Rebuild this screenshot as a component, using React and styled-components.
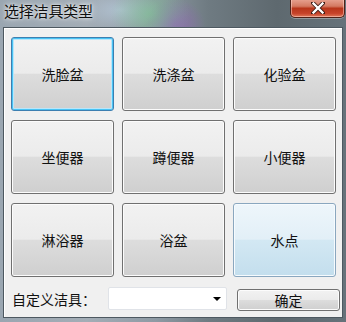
import React from "react";
import styled, { createGlobalStyle, css } from "styled-components";

const Global = createGlobalStyle`
  html, body { margin: 0; padding: 0; background: #5d6870; }
  body { font-family: "Noto Sans CJK SC", "Liberation Sans", sans-serif; }
`;

const Frame = styled.div`
  width: 346px;
  height: 322px;
  box-sizing: border-box;
  display: flex;
  flex-direction: column;
  background:
    radial-gradient(ellipse 40px 30px at 150px 14px, rgba(120,200,140,0.55), transparent),
    radial-gradient(ellipse 30px 25px at 175px 24px, rgba(150,90,190,0.6), transparent),
    radial-gradient(ellipse 40px 20px at 120px 10px, rgba(190,210,230,0.6), transparent),
    linear-gradient(90deg, #9aa6b1 0%, #a3adb6 25%, #8e9aa4 45%, #6f7b82 60%, #5e696f 80%, #66727a 100%);
  padding: 0 3px 4px 3px;
`;

const TitleBar = styled.div`
  height: 27px;
  display: flex;
  align-items: flex-start;
  justify-content: space-between;
  flex-shrink: 0;
`;

const Title = styled.div`
  font-size: 15px;
  line-height: 22px;
  padding-left: 1px;
  color: #101010;
  text-shadow: 0 0 6px rgba(255,255,255,0.9), 0 0 3px rgba(255,255,255,0.8);
  letter-spacing: -0.2px;
`;

const CloseBtn = styled.div`
  width: 55px;
  height: 19px;
  margin-top: -1px;
  margin-right: -2px;
  box-sizing: border-box;
  border: 1px solid #4e2219;
  border-top: none;
  border-radius: 0 0 5px 5px;
  background: linear-gradient(180deg, #e8a493 0%, #d47a62 40%, #b8361b 52%, #c7432a 80%, #e0785a 100%);
  box-shadow: inset 0 0 0 1px rgba(255,220,210,0.5), 0 1px 0 rgba(255,255,255,0.3);
  display: flex;
  align-items: center;
  justify-content: center;
`;

const Client = styled.div`
  flex: 1;
  background: #f0f0f0;
  border: 1px solid #4d5860;
  box-shadow: inset 1px 1px 0 #ffffff;
  padding: 9px 0 0 7px;
  display: flex;
  flex-direction: column;
`;

const Grid = styled.div`
  display: grid;
  grid-template-columns: repeat(3, 103px);
  grid-auto-rows: 74px;
  column-gap: 8px;
  row-gap: 9px;
`;

const Btn = styled.div`
  box-sizing: border-box;
  border: 1px solid #707070;
  border-radius: 3px;
  background: linear-gradient(180deg, #f2f2f2 0%, #ebebeb 49%, #dddddd 50%, #cfcfcf 100%);
  box-shadow: inset 0 0 0 1px #fcfcfc;
  display: flex;
  align-items: center;
  justify-content: center;
  font-size: 14px;
  color: #111;
  ${(p) =>
    p.$variant === "focus" &&
    css`
      border-color: #3c7fb1;
      box-shadow: inset 0 0 0 1px #48c3f4, inset 0 0 0 2px #b9e6fa;
    `}
  ${(p) =>
    p.$variant === "hover" &&
    css`
      border-color: #8aa7bf;
      background: linear-gradient(180deg, #eef6fb 0%, #e2eff7 49%, #d3e8f3 50%, #c3deed 100%);
      box-shadow: inset 0 0 0 1px #f6fbfe;
    `}
`;

const Bottom = styled.div`
  display: flex;
  align-items: center;
  margin-top: 10px;
  height: 24px;
`;

const Label = styled.div`
  font-size: 14px;
  color: #111;
  width: 96px;
  padding-left: 1px;
`;

const Combo = styled.div`
  width: 119px;
  height: 23px;
  box-sizing: border-box;
  background: #fff;
  border: 1px solid #e0e3e8;
  border-radius: 2px;
  display: flex;
  align-items: center;
  justify-content: flex-end;
  padding-right: 5px;
  margin-top: -1px;
`;

const Arrow = styled.div`
  width: 0;
  height: 0;
  border-left: 4px solid transparent;
  border-right: 4px solid transparent;
  border-top: 4px solid #000;
`;

const OkBtn = styled(Btn)`
  width: 103px;
  height: 22px;
  margin-left: 10px;
  margin-top: 2px;
  font-size: 14px;
  border-radius: 3px;
`;

const buttons = [
  ["洗脸盆", "focus"],
  ["洗涤盆"],
  ["化验盆"],
  ["坐便器"],
  ["蹲便器"],
  ["小便器"],
  ["淋浴器"],
  ["浴盆"],
  ["水点", "hover"],
];

export default function App() {
  return (
    <>
      <Global />
      <Frame>
        <TitleBar>
          <Title>选择洁具类型</Title>
          <CloseBtn>
            <svg width="14" height="12" viewBox="0 0 14 12">
              <path d="M2 1 L12 11 M12 1 L2 11" stroke="#3a1a14" strokeWidth="4" strokeLinecap="square" />
              <path d="M2.5 1.5 L11.5 10.5 M11.5 1.5 L2.5 10.5" stroke="#ffffff" strokeWidth="2.4" strokeLinecap="square" />
            </svg>
          </CloseBtn>
        </TitleBar>
        <Client>
          <Grid>
            {buttons.map(([t, v]) => (
              <Btn key={t} $variant={v}>{t}</Btn>
            ))}
          </Grid>
          <Bottom>
            <Label>自定义洁具：</Label>
            <Combo><Arrow /></Combo>
            <OkBtn>确定</OkBtn>
          </Bottom>
        </Client>
      </Frame>
    </>
  );
}
